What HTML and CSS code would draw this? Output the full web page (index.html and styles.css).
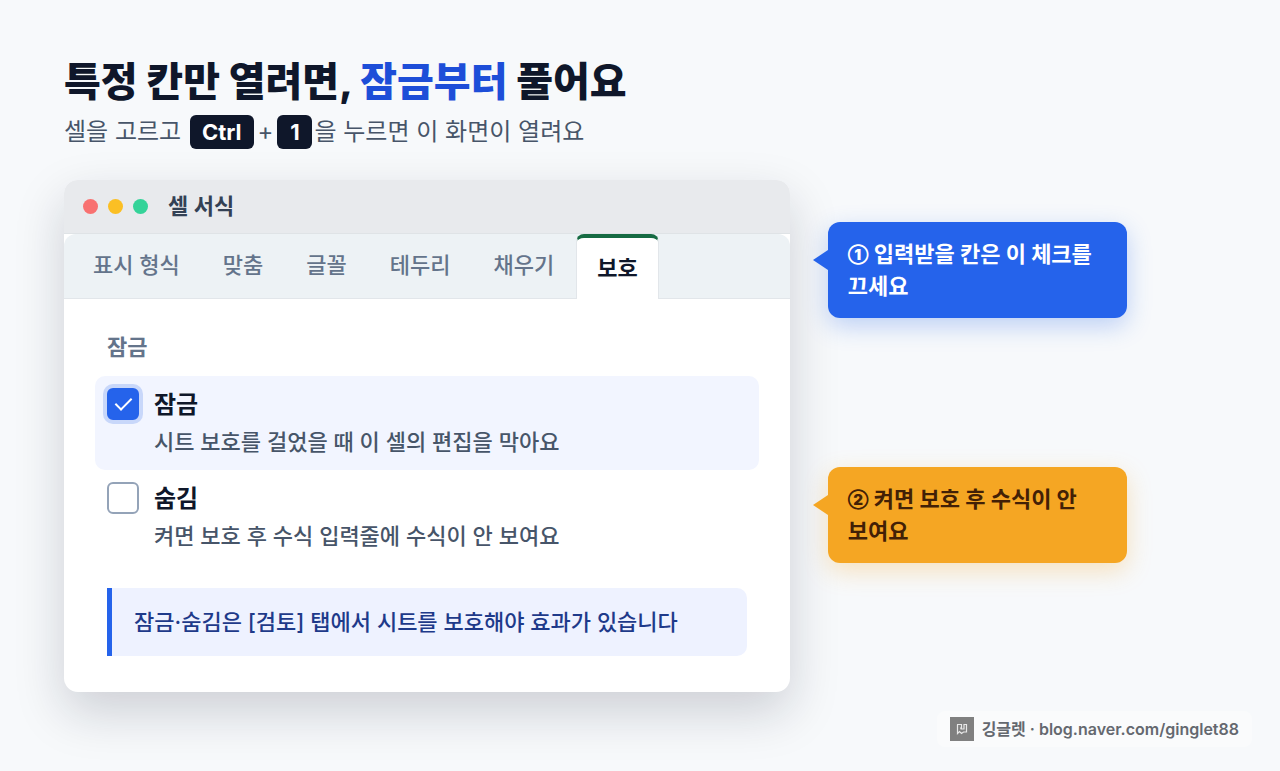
FILE: index.html
```html
<!DOCTYPE html>
<html lang="ko">
<head>
    <meta charset="UTF-8">
    <meta name="viewport" content="width=device-width, initial-scale=1.0">
    <title>특정 칸만 열려면, 잠금부터 풀어요</title>
    <link rel="stylesheet" href="styles.css">
</head>
<body>
    <main class="page">
        <header class="intro">
            <h1>특정 칸만 열려면, <span class="accent">잠금부터</span> 풀어요</h1>
            <p class="subtitle">셀을 고르고 <kbd>Ctrl</kbd><span class="plus">+</span><kbd>1</kbd>을 누르면 이 화면이 열려요</p>
        </header>

        <div class="stage">
            <section class="window">
                <div class="title-bar">
                    <span class="dot red"></span>
                    <span class="dot yellow"></span>
                    <span class="dot green"></span>
                    <h2>셀 서식</h2>
                </div>

                <div class="tabs" role="tablist">
                    <button class="tab" role="tab">표시 형식</button>
                    <button class="tab" role="tab">맞춤</button>
                    <button class="tab" role="tab">글꼴</button>
                    <button class="tab" role="tab">테두리</button>
                    <button class="tab" role="tab">채우기</button>
                    <button class="tab active" role="tab" aria-selected="true">보호</button>
                </div>

                <div class="panel">
                    <h3>잠금</h3>
                    <div class="option highlight">
                        <input type="checkbox" id="locked" checked>
                        <label for="locked">
                            <span class="option-name">잠금</span>
                            <span class="option-desc">시트 보호를 걸었을 때 이 셀의 편집을 막아요</span>
                        </label>
                    </div>
                    <div class="option">
                        <input type="checkbox" id="hidden">
                        <label for="hidden">
                            <span class="option-name">숨김</span>
                            <span class="option-desc">켜면 보호 후 수식 입력줄에 수식이 안 보여요</span>
                        </label>
                    </div>
                    <p class="note">잠금·숨김은 [검토] 탭에서 시트를 보호해야 효과가 있습니다</p>
                </div>
            </section>

            <aside class="callouts">
                <div class="callout blue"><p>① 입력받을 칸은 이 체크를 끄세요</p></div>
                <div class="callout orange"><p>② 켜면 보호 후 수식이 안 보여요</p></div>
            </aside>
        </div>
    </main>

    <footer class="credit">
        <svg class="credit-logo" viewBox="0 0 24 24" aria-hidden="true">
            <rect width="24" height="24" fill="#808080"/>
            <path d="M7 7.500H11.500V11H10M7.500 7.500V16.500L9.500 14.500L11.500 16.500L13.500 15H16.500V7.500H14V12H10.500" fill="none" stroke="#e8e8e8" stroke-width="1.200"/>
        </svg>
        <span>깅글렛 · blog.naver.com/ginglet88</span>
    </footer>
</body>
</html>
```

FILE: styles.css
```css
* {
    margin: 0;
    padding: 0;
    box-sizing: border-box;
}
body {
    min-height: 100vh;
    font-family: Inter, "Noto Sans CJK KR", sans-serif;
    font-size: 22px;
    background: #f7f9fb;
    color: #0f172a;
}
.page {
    padding: 52px 64px 64px;
}
h1 {
    font-size: 40px;
    line-height: 60px;
    font-weight: 800;
}
.accent {
    color: #1d4ed8;
}
.subtitle {
    font-size: 24px;
    line-height: 40px;
    color: #475569;
}
.plus {
    padding: 0 2px;
}
kbd {
    display: inline-block;
    min-width: 35px;
    margin: 0 2px;
    padding: 0 12px;
    border-radius: 6px;
    background: #0f172a;
    color: #fff;
    font-family: inherit;
    font-size: 22px;
    line-height: 34px;
    font-weight: 700;
    text-align: center;
}
.stage {
    display: grid;
    grid-template-columns: 63% 26%;
    gap: 38px;
    align-items: start;
    margin-top: 28px;
}
.window {
    border-radius: 14px;
    background: #fff;
    box-shadow: 0 20px 50px rgba(15, 23, 42, 0.18);
}
.title-bar {
    display: flex;
    align-items: center;
    gap: 10px;
    height: 54px;
    padding: 0 19px;
    border-bottom: 1px solid #dfe3e6;
    border-radius: 14px 14px 0 0;
    background: #e8eaed;
}
.title-bar h2 {
    margin-left: 10px;
    padding-bottom: 2px;
    font-size: 22px;
    line-height: 32px;
    font-weight: 600;
    color: #334155;
}
.dot {
    width: 15px;
    height: 15px;
    border-radius: 50%;
}
.dot.red {
    background: #f87171;
}
.dot.yellow {
    background: #fbbf24;
}
.dot.green {
    background: #34d399;
}
.tabs {
    display: flex;
    gap: 1px;
    height: 65px;
    padding: 0 8px;
    border-bottom: 1px solid #e2e6ea;
    border-radius: 12px 12px 0 0;
    background: #edf2f5;
}
.tab {
    padding: 0 20px 6px;
    border: 1px solid transparent;
    background: none;
    color: #64748b;
    font: inherit;
    font-weight: 500;
    cursor: pointer;
}
.tab.active {
    height: 65px;
    border-color: #e2e6ea;
    border-top: 4px solid #166b43;
    border-bottom: none;
    border-radius: 8px 8px 0 0;
    background: #fff;
    color: #0f172a;
    font-weight: 700;
}
.panel {
    padding: 32px 43px 36px;
}
.panel h3 {
    margin-bottom: 13px;
    font-size: 22px;
    line-height: 32px;
    font-weight: 600;
    color: #64748b;
}
.option {
    display: flex;
    gap: 15px;
    margin: 0 -12px;
    padding: 12px;
    border-radius: 10px;
}
.option.highlight {
    background: #f2f5ff;
}
.option input {
    display: grid;
    place-items: center;
    flex: none;
    width: 32px;
    height: 32px;
    border: 2px solid #94a3b8;
    border-radius: 6px;
    background: #fff;
    appearance: none;
}
.option input:checked {
    border-color: #2563eb;
    background: #2563eb;
    box-shadow: 0 0 0 4px #c8d7fa;
}
.option input:checked::after {
    content: "";
    width: 7px;
    height: 14px;
    margin-top: -4px;
    border: solid #fff;
    border-width: 0 2px 2px 0;
    transform: rotate(45deg);
}
.option label {
    flex: 1;
}
.option-name,
.option-desc {
    display: block;
}
.option-name {
    font-size: 24px;
    line-height: 34px;
    font-weight: 600;
}
.option-desc {
    margin-top: 4px;
    line-height: 32px;
    font-weight: 500;
    color: #475569;
}
.note {
    margin-top: 24px;
    padding: 18px 22px;
    border-left: 5px solid #2563eb;
    border-radius: 0 10px 10px 0;
    background: #eef2ff;
    color: #1e3a8a;
    line-height: 32px;
    font-weight: 500;
}
.callouts {
    display: flex;
    flex-direction: column;
    gap: 149px;
    padding-top: 42px;
}
.callout {
    position: relative;
    padding: 16px 20px;
    border-radius: 12px;
    line-height: 32px;
    font-weight: 700;
    word-break: keep-all;
}
.callout::before {
    content: "";
    position: absolute;
    top: 28px;
    right: 100%;
    border: 10px solid transparent;
    border-right: 15px solid #2563eb;
    border-left: none;
}
.callout.blue {
    background: #2563eb;
    color: #fff;
    box-shadow: 0 8px 24px rgba(37, 99, 235, 0.28);
}
.callout.orange {
    background: #f5a623;
    color: #422006;
    box-shadow: 0 8px 24px rgba(245, 166, 35, 0.28);
}
.callout.orange::before {
    border-right-color: #f5a623;
}
/* step number */
.callout p::first-letter {
    font-size: 15px;
    line-height: 1;
    font-weight: 900;
    vertical-align: 2px;
}
.credit {
    position: absolute;
    right: 28px;
    bottom: 24px;
    display: flex;
    align-items: center;
    gap: 8px;
    padding: 6px 13px;
    border-radius: 8px;
    background: #fafbfc;
    color: #64686f;
    font-size: 16px;
    line-height: 24px;
    font-weight: 600;
}
.credit-logo {
    width: 24px;
    height: 24px;
}
```
